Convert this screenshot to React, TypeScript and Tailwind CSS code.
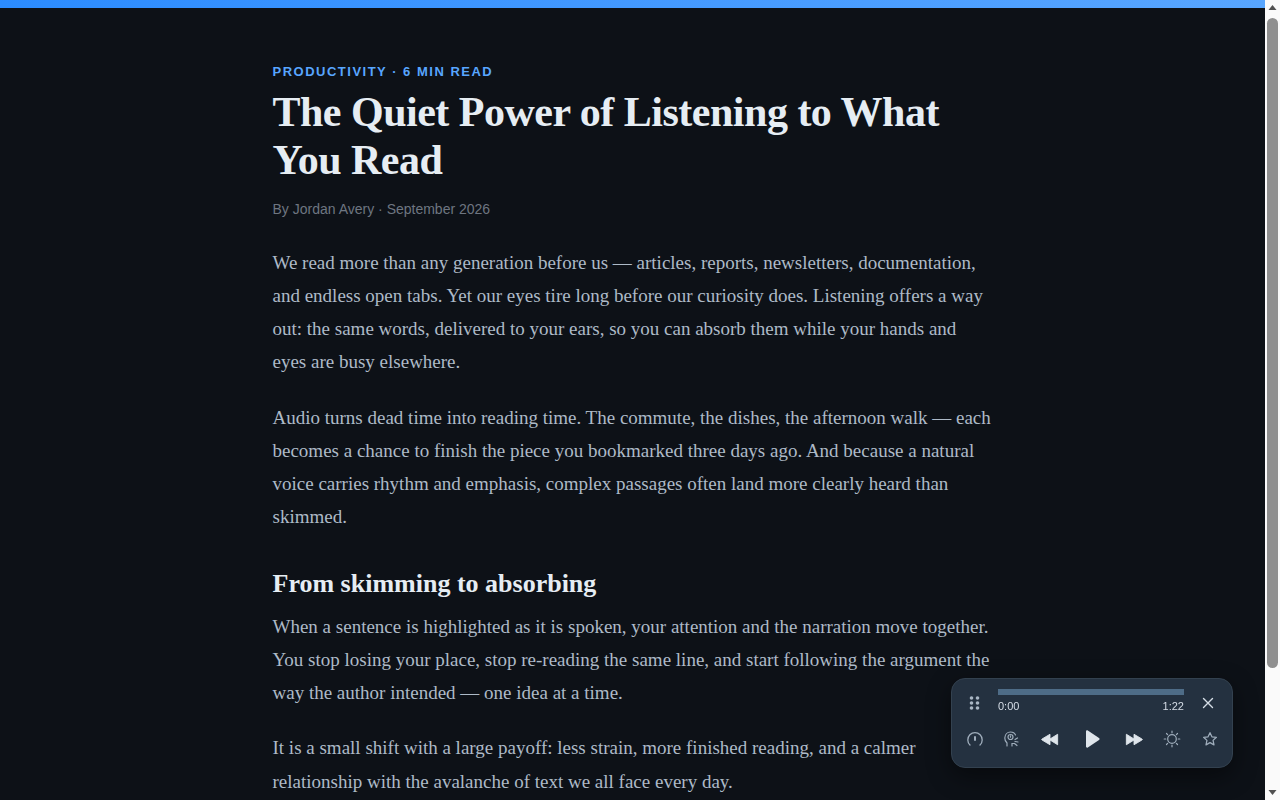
import React from "react";

const serif = "font-['Liberation_Serif',serif]";
const sans = "font-['Liberation_Sans',sans-serif]";

function Para({ children, cls = "mb-[23px] leading-[33px]" }: { children: React.ReactNode; cls?: string }) {
  return <p className={`${cls} text-[19px] text-[#adbac7]`}>{children}</p>;
}

function Slot({ w, children }: { w: string; children: React.ReactNode }) {
  return <div className={`${w} h-[24px] flex items-center justify-center shrink-0`}>{children}</div>;
}

function Player() {
  return (
    <div className={`fixed left-[951px] top-[678px] w-[282px] h-[90px] rounded-[14px] bg-[#243140] border border-[#33414f] shadow-[0_8px_24px_rgba(0,0,0,0.45)] ${sans}`}>
      <div className="flex items-start h-[48px] pt-[10px]">
        <div className="w-[46px] h-[28px] flex items-center justify-center">
          <svg width="12" height="16" viewBox="0 0 12 16" fill="#a9b6c4">
            <circle cx="2.500" cy="3" r="1.800" /><circle cx="8.500" cy="3" r="1.800" />
            <circle cx="2.500" cy="8" r="1.800" /><circle cx="8.500" cy="8" r="1.800" />
            <circle cx="2.500" cy="13" r="1.800" /><circle cx="8.500" cy="13" r="1.800" />
          </svg>
        </div>
        <div className="w-[186px]">
          <div className="h-[6px] bg-[#4e6c87]" />
          <div className="flex justify-between mt-[4px] text-[11px] leading-[14px] text-[#d5dde6]">
            <span>0:00</span><span>1:22</span>
          </div>
        </div>
        <div className="flex-1 h-[28px] flex items-center justify-center">
          <svg width="14" height="14" viewBox="0 0 14 14" fill="none" stroke="#d5dde6" strokeWidth="1.400" strokeLinecap="round">
            <path d="M2.500 2.500l9 9M11.500 2.500l-9 9" />
          </svg>
        </div>
      </div>
      <div className="flex items-center pl-[5px] h-[24px]">
        <Slot w="w-[36px]">
          <svg width="18" height="18" viewBox="0 0 18 18" fill="none" stroke="#9fadbb" strokeWidth="1.300" strokeLinecap="round">
            <path d="M4 15a7.200 7.200 0 1 1 10 0" />
            <path d="M9 7v3" strokeWidth="2" />
          </svg>
        </Slot>
        <Slot w="w-[38px]">
          <svg width="18" height="18" viewBox="0 0 18 18" fill="none" stroke="#9fadbb" strokeWidth="1.200" strokeLinecap="round">
            <path d="M4 16v-3C2.500 11.500 1.700 10 1.800 8 2 4.500 4.500 2 7.500 2c2.500 0 4.300 1.200 5 3" />
            <path d="M9 16v-2.500h2" />
            <circle cx="7.500" cy="7" r="2.500" />
            <path d="M7.500 5.800v1.400" />
            <path d="M12 9.500l2.500-1.500M12 11.500l3 .5M11.500 13.500l2.500 2" />
          </svg>
        </Slot>
        <Slot w="w-[38px]">
          <svg width="18" height="15" viewBox="0 0 20 16" fill="#dfe5eb">
            <path d="M10 2.200v11.600L1.200 8.600a.7.7 0 0 1 0-1.200z" stroke="#dfe5eb" strokeLinejoin="round" />
            <path d="M18.500 2.200v11.600L10 8.600v-1.200z" stroke="#dfe5eb" strokeLinejoin="round" />
          </svg>
        </Slot>
        <Slot w="w-[46px]">
          <svg width="18" height="20" viewBox="0 0 18 20" fill="#dfe5eb" className="-ml-[1px]">
            <path d="M3 2.500c0-1 1-1.500 1.800-1l11.200 7.500c.8.500.8 1.500 0 2L4.800 18.500c-.8.500-1.800 0-1.800-1z" />
          </svg>
        </Slot>
        <Slot w="w-[38px]">
          <svg width="18" height="15" viewBox="0 0 20 16" fill="#dfe5eb">
            <path d="M1.500 2.200v11.600L10 8.600v-1.200z" stroke="#dfe5eb" strokeLinejoin="round" />
            <path d="M10 2.200v11.600l8.800-5.200a.7.7 0 0 0 0-1.200z" stroke="#dfe5eb" strokeLinejoin="round" />
          </svg>
        </Slot>
        <Slot w="w-[38px]">
          <svg width="18" height="18" viewBox="0 0 18 18" fill="none" stroke="#9fadbb" strokeWidth="1.200" strokeLinecap="round">
            <circle cx="9" cy="9" r="4.300" />
            <path d="M9 1.200v1.600M9 15.200v1.600M1.200 9h1.600M15.200 9h1.600M3.500 3.500l1.100 1.100M13.400 13.400l1.100 1.100M3.500 14.500l1.100-1.100M13.400 4.600l1.100-1.100" />
          </svg>
        </Slot>
        <Slot w="w-[38px]">
          <svg width="16" height="16" viewBox="0 0 24 24" fill="none" stroke="#9fadbb" strokeWidth="1.900" strokeLinejoin="round">
            <path d="M12 2.500l2.900 6.200 6.700.8-5 4.600 1.400 6.700L12 17.400 6 20.800l1.400-6.700-5-4.600 6.700-.8z" />
          </svg>
        </Slot>
      </div>
    </div>
  );
}

function ScrollRail() {
  return (
    <div className="fixed top-0 right-0 bottom-0 w-[15px] bg-[#fafafa] flex flex-col items-center">
      <svg width="15" height="17" viewBox="0 0 15 17" className="shrink-0"><path d="M7.500 5L3.500 10h8z" fill="#505050" /></svg>
      <div className="w-[11px] h-[650px] rounded-[6px] bg-[#8f8f8f] mt-[1px]" />
      <div className="flex-1" />
      <svg width="15" height="17" viewBox="0 0 15 17" className="shrink-0"><path d="M7.500 12L3.500 7h8z" fill="#505050" /></svg>
    </div>
  );
}

export default function App() {
  return (
    <div className="bg-[#0d1117] min-h-[943px] w-[1265px]">
      <div className="fixed top-0 left-0 w-[1265px] h-[8px] bg-gradient-to-r from-[#2b8cff] to-[#58a6ff]" />
      <main className={`w-[720px] mx-auto pt-[64px] pb-[130px] ${serif}`}>
        <div className={`${sans} text-[13px] leading-[15px] font-bold tracking-[1.500px] text-[#58a6ff]`}>
          PRODUCTIVITY · 6 MIN READ
        </div>
        <h1 className="mt-[9px] text-[42px] leading-[48px] tracking-[-0.500px] font-bold text-[#e6edf3]">
          The Quiet Power of Listening to What You Read
        </h1>
        <div className={`${sans} mt-[15px] mb-[27px] text-[14px] leading-[20px] text-[#6e7681]`}>
          By Jordan Avery · September 2026
        </div>
        <Para>
          We read more than any generation before us — articles, reports, newsletters, documentation, and endless open tabs. Yet our eyes tire long before our curiosity does. Listening offers a way out: the same words, delivered to your ears, so you can absorb them while your hands and eyes are busy elsewhere.
        </Para>
        <Para>
          Audio turns dead time into reading time. The commute, the dishes, the afternoon walk — each becomes a chance to finish the piece you bookmarked three days ago. And because a natural voice carries rhythm and emphasis, complex passages often land more clearly heard than skimmed.
        </Para>
        <h2 className="mt-[35px] mb-[10px] text-[26px] leading-[32px] font-bold text-[#e6edf3]">From skimming to absorbing</h2>
        <Para cls="mb-[22px] leading-[33px]">
          When a sentence is highlighted as it is spoken, your attention and the narration move together. You stop losing your place, stop re-reading the same line, and start following the argument the way the author intended — one idea at a time.
        </Para>
        <Para cls="mb-0 leading-[34px]">
          It is a small shift with a large payoff: less strain, more finished reading, and a calmer relationship with the avalanche of text we all face every day.
        </Para>
      </main>
      <Player />
      <ScrollRail />
    </div>
  );
}
